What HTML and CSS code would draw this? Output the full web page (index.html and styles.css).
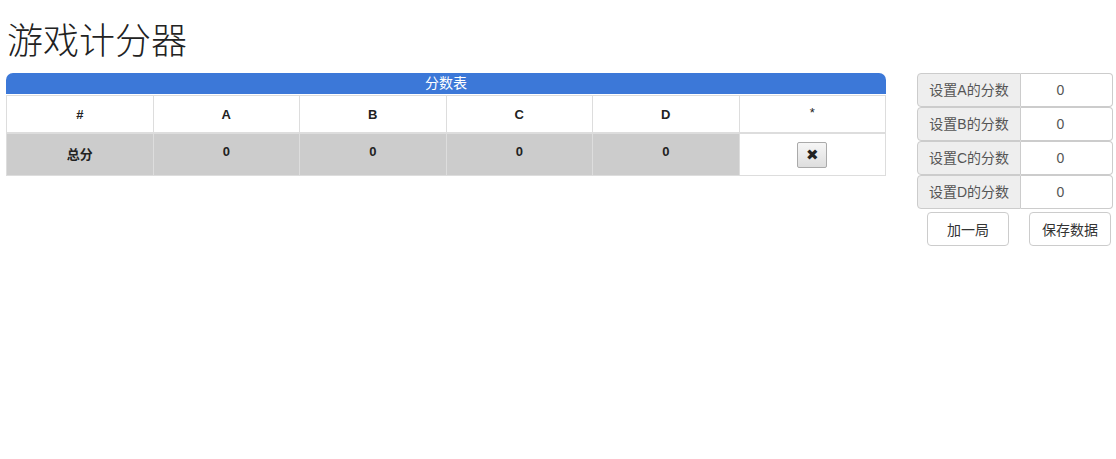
FILE: index.html
```html
<!DOCTYPE html>
<html lang="zh-CN">

<head>
    <meta charset="UTF-8">
    <title>游戏计分器</title>
    <link rel="stylesheet" href="styles.css">
</head>

<body>

    <h1 class="title">游戏计分器</h1>

    <div class="layout">
        <div class="board">
            <div class="board-head">分数表</div>
            <table class="scores">
                <thead>
                    <tr>
                        <th>#</th>
                        <th>A</th>
                        <th>B</th>
                        <th>C</th>
                        <th>D</th>
                        <th class="star">*</th>
                    </tr>
                </thead>
                <tbody>
                    <tr class="total">
                        <td>总分</td>
                        <td>0</td>
                        <td>0</td>
                        <td>0</td>
                        <td>0</td>
                        <td class="action"><button class="del-btn">&#10006;</button></td>
                    </tr>
                </tbody>
            </table>
        </div>

        <div class="panel">
            <div class="input-group">
                <span class="addon">设置A的分数</span>
                <input class="field" type="text" value="0">
            </div>
            <div class="input-group">
                <span class="addon">设置B的分数</span>
                <input class="field" type="text" value="0">
            </div>
            <div class="input-group">
                <span class="addon">设置C的分数</span>
                <input class="field" type="text" value="0">
            </div>
            <div class="input-group">
                <span class="addon">设置D的分数</span>
                <input class="field" type="text" value="0">
            </div>
            <div class="actions">
                <button class="btn">加一局</button>
                <button class="btn">保存数据</button>
            </div>
        </div>
    </div>

</body>

</html>
```

FILE: styles.css
```css
body {
    font-family: "Liberation Sans", "Noto Sans CJK SC", sans-serif;
    font-size: 14px;
    margin: 0;
    padding: 0 3px 0 6px;
    color: #333;
    background: #fff;
}

.title {
    font-family: "Noto Sans CJK SC", sans-serif;
    font-weight: 300;
    font-size: 36px;
    line-height: 40px;
    margin: 18px 0 15px 1px;
    color: #222;
}

.layout {
    display: flex;
    align-items: flex-start;
    gap: 31px;
}

.board {
    width: 880px;
}

.board-head {
    background: #3c78d8;
    color: #fff;
    text-align: center;
    height: 21px;
    line-height: 21px;
    border-radius: 7px 7px 0 0;
    font-size: 14px;
    margin-bottom: 1px;
}

.scores {
    width: 880px;
    border-collapse: collapse;
    table-layout: fixed;
}

.scores th,
.scores td {
    border: 1px solid #ddd;
    text-align: center;
    font-weight: bold;
    font-size: 13px;
    color: #222;
}

.scores th {
    height: 34px;
    border-bottom: 2px solid #ddd;
}

.scores th.star {
    font-weight: normal;
    vertical-align: top;
    padding-top: 9px;
    height: 25px;
}

.scores td {
    background: #ccc;
    vertical-align: top;
    padding-top: 10px;
    height: 30px;
}

.scores td.action {
    background: #fff;
    padding-top: 8px;
    height: 32px;
}

.del-btn {
    width: 30px;
    height: 26px;
    padding: 0;
    border: 1px solid #aaa;
    border-radius: 2px;
    background: linear-gradient(#f6f6f6, #dedede);
    font-size: 15px;
    line-height: 24px;
    color: #222;
    font-family: "DejaVu Sans", sans-serif;
}

.panel {
    width: 196px;
    display: flex;
    flex-direction: column;
}

.input-group {
    display: flex;
    height: 34px;
}

.addon {
    width: 102px;
    background: #eee;
    border: 1px solid #ccc;
    border-radius: 4px 0 0 4px;
    color: #555;
    text-align: center;
    line-height: 32px;
    font-size: 14px;
}

.field {
    width: 92px;
    box-sizing: border-box;
    border: 1px solid #ccc;
    border-left: none;
    border-radius: 0 4px 4px 0;
    text-align: center;
    font-size: 14px;
    color: #555;
    font-family: "Liberation Sans", sans-serif;
    padding: 0 12px 0 0;
    margin: 0;
}

.actions {
    display: flex;
    justify-content: space-between;
    padding: 3px 2px 0 10px;
}

.btn {
    width: 82px;
    height: 34px;
    background: #fff;
    border: 1px solid #ccc;
    border-radius: 4px;
    font-size: 14px;
    color: #333;
    font-family: "Liberation Sans", "Noto Sans CJK SC", sans-serif;
}
```
